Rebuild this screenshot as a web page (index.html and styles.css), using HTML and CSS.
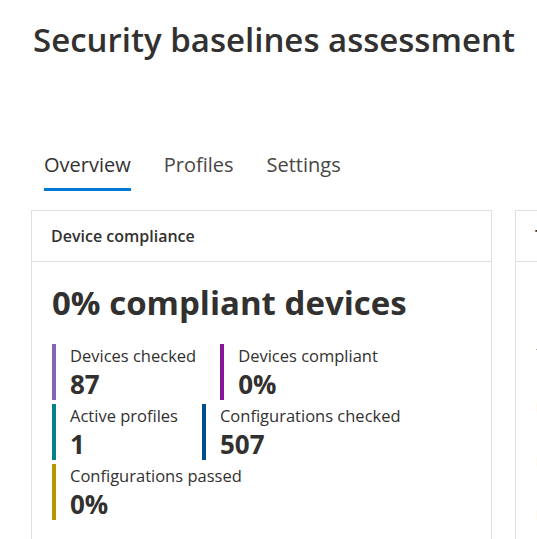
FILE: index.html
```html
<!DOCTYPE html>
<html lang="en">
<head>
<meta charset="utf-8">
<title>Security baselines assessment</title>
<link rel="stylesheet" href="styles.css">
</head>
<body>
<h1 class="title">Security baselines assessment</h1>
<nav class="tabs">
  <span class="tab active">Overview</span>
  <span class="tab">Profiles</span>
  <span class="tab">Settings</span>
</nav>
<div class="cards">
  <section class="card">
    <header class="card-head">Device compliance</header>
    <div class="card-body">
      <div class="big">0% compliant devices</div>
      <div class="metrics">
        <div class="metric c1"><div class="label">Devices checked</div><div class="value">87</div></div>
        <div class="metric c2"><div class="label">Devices compliant</div><div class="value">0%</div></div>
        <div class="metric c3"><div class="label">Active profiles</div><div class="value">1</div></div>
        <div class="metric c4"><div class="label">Configurations checked</div><div class="value">507</div></div>
        <div class="metric c5"><div class="label">Configurations passed</div><div class="value">0%</div></div>
      </div>
    </div>
  </section>
  <section class="card second">
    <header class="card-head">Top failing settings</header>
    <div class="card-body list">
      <div class="row">Turn on Windows Defender</div>
      <div class="row">Block Office macros</div>
      <div class="row">Enable BitLocker</div>
      <div class="row">Disable SMBv1</div>
    </div>
  </section>
</div>
</body>
</html>
```

FILE: styles.css
```css
html, body {
  margin: 0;
  padding: 0;
  overflow: hidden;
  background: #ffffff;
}
body {
  font-family: "Open Sans", "Noto Sans", sans-serif;
  color: #323130;
  width: 537px;
  height: 539px;
}
.title {
  margin: 0;
  padding: 18px 0 0 33px;
  font-size: 33px;
  line-height: 44px;
  font-weight: 600;
  white-space: nowrap;
}
.tabs {
  display: flex;
  gap: 33px;
  margin-top: 89px;
  padding-left: 44px;
}
.tab {
  font-size: 20px;
  line-height: 28px;
  padding-bottom: 9px;
  border-bottom: 3px solid transparent;
  color: #484644;
}
.tab.active {
  color: #323130;
  border-bottom-color: #0078d4;
}
.cards {
  display: flex;
  gap: 23px;
  margin-top: 19px;
  padding-left: 31px;
}
.card {
  flex: 0 0 461px;
  box-sizing: border-box;
  border: 1px solid #e1dfdd;
  height: 360px;
}
.card-head {
  height: 50px;
  line-height: 50px;
  padding-left: 19px;
  font-size: 16px;
  font-weight: 600;
  border-bottom: 1px solid #e1dfdd;
  white-space: nowrap;
}
.card-body {
  padding: 19px 20px 0 20px;
}
.big {
  font-size: 33px;
  line-height: 44px;
  font-weight: 700;
  white-space: nowrap;
}
.metrics {
  display: flex;
  flex-wrap: wrap;
  column-gap: 24px;
  row-gap: 4px;
  margin-top: 19px;
}
.metric {
  border-left: 4px solid;
  padding-left: 14px;
  height: 56px;
  box-sizing: border-box;
}
.label {
  font-size: 16.5px;
  line-height: 24px;
  white-space: nowrap;
}
.value {
  font-size: 26px;
  line-height: 32px;
  font-weight: 700;
}
.c1 { border-color: #8764b8; }
.c2 { border-color: #881798; }
.c3 { border-color: #038387; }
.c4 { border-color: #004e8c; }
.c5 { border-color: #b89500; }
.list {
  padding-top: 64px;
}
.row {
  font-size: 13px;
  line-height: 54px;
  white-space: nowrap;
  color: #a19f9d;
}
```
